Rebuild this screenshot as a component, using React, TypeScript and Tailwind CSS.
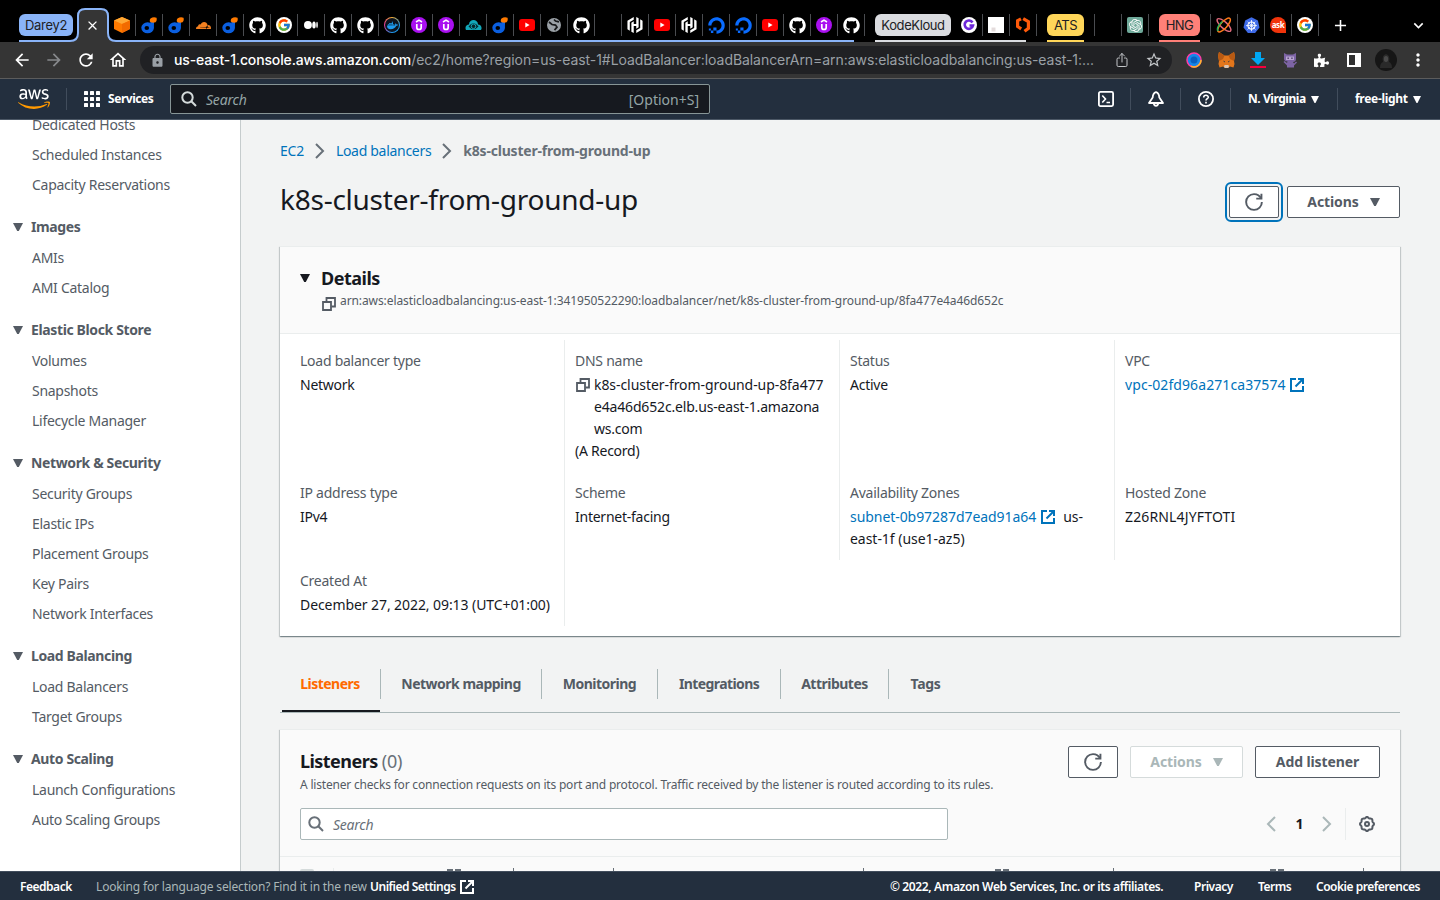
import React from "react";
import { FaGithub, FaDigitalOcean, FaDocker, FaPuzzlePiece, FaAws } from "react-icons/fa";
import { FcGoogle } from "react-icons/fc";
import { SiHashicorp, SiCloudflare, SiOpenai } from "react-icons/si";
import { IoShareOutline } from "react-icons/io5";
import { MdLock, MdArrowBack, MdArrowForward, MdRefresh, MdStarOutline, MdMoreVert, MdOutlineHome, MdClose, MdAdd, MdExpandMore } from "react-icons/md";

/* ---------- tab favicons ---------- */

const Box = () => (
  <svg width="18" height="18" viewBox="0 0 18 18">
    <path d="M9 1l8 3.6V13L9 17l-8-4V4.6z" fill="#ff7a00" />
    <path d="M9 1l8 3.6L9 8 1 4.6z" fill="#ffa733" />
    <path d="M9 8l8-3.4V13L9 17z" fill="#f26a00" />
  </svg>
);

const Darey = () => (
  <svg width="16" height="17" viewBox="0 0 16 17">
    <path d="M9 4.5L13 5c0 3 0 5.500-1.200 8" fill="#0b5fe0" />
    <ellipse cx="6.600" cy="10.800" rx="6.300" ry="5.500" fill="#0b5fe0" />
    <ellipse cx="5.800" cy="11" rx="2.300" ry="2" fill="#000" />
    <path d="M9.500 1.500Q12.500-.5 15.500.8 16.300 3.500 14.500 5.300 11.500 6.300 9 4.800 8.300 3 9.500 1.500z" fill="#ff7a00" />
  </svg>
);

const Github = () => <FaGithub size={17} color="#fff" />;
const Google = () => (
  <span className="flex size-4 items-center justify-center rounded-full bg-white">
    <FcGoogle size={14} />
  </span>
);
const Cloudflare = () => <SiCloudflare size={15} color="#f38020" />;
const Medium = () => (
  <svg width="14" height="14" viewBox="0 0 16 16" fill="#fff">
    <circle cx="4.500" cy="8" r="4.500" />
    <ellipse cx="11.400" cy="8" rx="2" ry="4" />
    <ellipse cx="14.900" cy="8" rx=".9" ry="3.600" />
  </svg>
);
const Docker = () => (
  <span className="flex size-4 items-center justify-center rounded-full bg-[conic-gradient(#f9b233,#1d9bf0,#1d9bf0,#e5389b,#f9b233)] p-px">
    <span className="flex size-full items-center justify-center rounded-full bg-[#0c1420]">
      <FaDocker size={11} color="#1d9bf0" />
    </span>
  </span>
);
const Udemy = () => (
  <svg width="16" height="16" viewBox="0 0 16 16" fill="none" stroke="#fff">
    <circle cx="8" cy="8" r="8" fill="#a910f0" stroke="none" />
    <path d="M5 5l3-1.900L11 5" strokeWidth="1.500" />
    <path d="M5.800 7v3.400c0 2.700 4.400 2.700 4.400 0V7" strokeWidth="1.700" />
  </svg>
);
const CloudEye = () => (
  <svg width="17" height="12" viewBox="0 0 17 12">
    <path d="M1 11C-.5 8 1.500 5.500 4 5.500 4-.5 13-.5 13 5.500c3 0 4.500 3 3 5.500z" fill="#12a7b8" />
    <path d="M3.500 7.500Q8.500 1 13.500 7.500 8.500 13 3.500 7.500z" fill="#06262b" />
    <circle cx="8.500" cy="7.300" r="2.300" fill="none" stroke="#12a7b8" />
  </svg>
);
const Youtube = () => (
  <svg width="16" height="12" viewBox="0 0 16 12">
    <rect width="16" height="12" rx="3" fill="#f00" />
    <path d="M6.300 3.500v5l4.300-2.500z" fill="#fff" />
  </svg>
);
const Globe = () => (
  <svg width="14" height="14" viewBox="0 0 14 14">
    <circle cx="7" cy="7" r="7" fill="#9aa0a6" />
    <path d="M2 4l3 2.500 3.500.6 1.500 2-2.500 3M7 1.500L8.500 3 12 3.800" fill="none" stroke="#17181a" strokeWidth="1.700" />
  </svg>
);
const Hashi = () => <SiHashicorp size={16} color="#fff" />;
const Ocean = () => <FaDigitalOcean size={17} color="#0a6cff" />;
const PurpleG = () => (
  <svg width="16" height="16" viewBox="0 0 16 16" fill="none">
    <circle cx="8" cy="8" r="8" fill="#fff" />
    <path d="M11.500 5.500A4.200 4.200 0 1 0 12 8.500H8.500" stroke="#6d28d9" strokeWidth="2.600" />
  </svg>
);
const Page = () => (
  <svg width="16" height="16" viewBox="0 0 16 16">
    <path d="M0 0h16v16H0z" fill="#fff" />
    <path d="M3.500 10.500h4v4h-4z" fill="#e4dcdc" />
  </svg>
);
const Brackets = () => (
  <svg width="16" height="16" viewBox="0 0 16 16" fill="none" stroke="#ff5a0a" strokeWidth="3.200">
    <path d="M6 1.800L2.600 3.700v5.800l3.600 2.400" />
    <path d="M8.200 1.600l5.200 3v6.800L9.500 14.200" />
  </svg>
);
const OpenAI = () => (
  <span className="flex size-4 items-center justify-center rounded-[2px] bg-[#6fa99a]">
    <SiOpenai size={13} color="#fff" />
  </span>
);
const Orbit = () => (
  <svg width="16" height="16" viewBox="0 0 16 16" fill="none" strokeWidth="1.500">
    <ellipse cx="8" cy="8" rx="8.800" ry="3.200" transform="rotate(42 8 8)" stroke="#e26a7c" />
    <ellipse cx="8" cy="8" rx="8.800" ry="3.200" transform="rotate(-48 8 8)" stroke="#ff7a1a" />
    <path d="M2 14c-1.500-2.500 1-6.500 4.500-9.500" stroke="#21b35b" />
  </svg>
);
const Kube = () => (
  <svg width="17" height="17" viewBox="0 0 17 17" fill="none">
    <path d="M8.500.3l6.400 3.100 1.600 7-4.400 5.600H4.900L.5 10.400l1.600-7z" fill="#3f6be8" />
    <circle cx="8.500" cy="8.600" r="3.600" stroke="#fff" strokeWidth="1.200" />
    <path d="M8.500 3v11.200M3 8.600h11M4.600 4.700l7.800 7.800M12.400 4.700l-7.800 7.800" stroke="#fff" strokeWidth=".8" />
  </svg>
);
const Ask = () => (
  <span className="flex size-4 items-center justify-center rounded-full rounded-br-none bg-[#f1340b] font-['Noto_Sans',sans-serif] text-[8px] leading-none font-bold tracking-[-0.4px] text-white">
    ask
  </span>
);
const Blank = () => null;

const darey = [Box, Darey, Darey, Cloudflare, Darey, Github, Google, Medium, Github, Github, Docker, Udemy, Udemy, CloudEye, Darey, Youtube, Globe, Github, Blank, Hashi, Youtube, Hashi, Ocean, Ocean, Youtube, Github, Udemy, Github];

const Tabs = ({ items }: { items: React.ComponentType[] }) => (
  <>
    {items.map((Icon, i) => (
      <div key={i} className="flex h-[22px] w-[27px] items-center justify-center border-r border-[#4a4c50]">
        <Icon />
      </div>
    ))}
  </>
);

const TabStrip = () => (
  <div className="relative flex h-[42px] shrink-0 items-center bg-black pt-2 font-[Inter,sans-serif] text-[13px] text-[#202124]">
    <div className="ml-[19px] flex h-[22px] w-[54px] items-center justify-center rounded-[6px] bg-[#8ab4f8] tracking-[-0.3px]">Darey2</div>
    <svg className="absolute top-[7px] left-[19px]" width="836" height="35" viewBox="0 0 836 35" fill="none">
      <path d="M0 34h51q8 0 8-8V9q0-7 7-7h16q7 0 7 7v17q0 8 8 8v1H51z" fill="#353535" />
      <path d="M0 34h51q8 0 8-8V9q0-7 7-7h16q7 0 7 7v17q0 8 8 8h738" stroke="#8ab4f8" strokeWidth="2" />
    </svg>
    <div className="relative flex w-[36px] justify-end pr-[9px]">
      <MdClose size={15} color="#fff" />
    </div>
    <Tabs items={darey} />
    <div className="ml-[10px] flex h-[22px] w-[76px] items-center justify-center rounded-[6px] bg-[#dadce0] tracking-[-0.4px]">KodeKloud</div>
    <div className="flex pl-[5px]">
      <Tabs items={[PurpleG, Page, Brackets]} />
    </div>
    <div className="ml-[10px] flex h-[22px] w-[37px] items-center justify-center rounded-[6px] bg-[#ffd659] tracking-[-0.6px]">ATS</div>
    <div className="ml-[10px] flex border-l border-[#4a4c50]">
      <Tabs items={[Blank, OpenAI]} />
    </div>
    <div className="ml-[10px] flex h-[22px] w-[41px] items-center justify-center rounded-[6px] bg-[#ff8078] tracking-[-0.6px]">HNG</div>
    <div className="ml-[10px] flex border-l border-[#4a4c50]">
      <Tabs items={[Orbit, Kube, Ask, Google]} />
    </div>
    <div className="ml-3 text-white">
      <MdAdd size={19} />
    </div>
    <div className="mr-3 ml-auto text-white">
      <MdExpandMore size={19} />
    </div>
    <i className="absolute bottom-0 left-[875px] h-0.5 w-[151px] bg-[#dadce0]" />
    <i className="absolute bottom-0 left-[1047px] h-0.5 w-[37px] bg-[#ffd659]" />
    <i className="absolute bottom-0 left-[1159px] h-0.5 w-[41px] bg-[#ff8078]" />
  </div>
);

/* ---------- browser toolbar ---------- */

const Fox = () => (
  <svg width="17" height="16" viewBox="0 0 17 16">
    <path d="M1 0l5.500 3.500h4L16 0l1 4-1 5 .5 3-1 3.500-3.500-1-2 1.500H7l-2-1.500-3.500 1-1-3.500L1 9 0 4z" fill="#e2761b" />
    <path d="M1 0l5.500 3.500L5 7 1 9 0 4zM16 0l-5.500 3.500L12 7l4 2 1-5z" fill="#b85a13" />
    <path d="M5 8.500l2 1-.5 1zM12 8.500l-2 1 .5 1z" fill="#233447" />
    <path d="M6.500 13h4l.5 2-1 1H7l-1-1z" fill="#d8c5b5" />
  </svg>
);

const Toolbar = () => (
  <div className="flex h-[37px] shrink-0 items-center border-b border-[#5c5c5c] bg-[#353535] text-white">
    <div className="flex w-[140px] shrink-0 items-center gap-[12px] pl-[12px]">
      <MdArrowBack size={20} />
      <MdArrowForward size={20} color="#87898c" />
      <MdRefresh size={20} />
      <MdOutlineHome size={20} />
    </div>
    <div className="flex h-7 w-[1032px] shrink-0 items-center rounded-full bg-[#202124] pl-[10px] font-[Inter,sans-serif] text-[14px]">
      <MdLock size={15} color="#9aa0a6" />
      <p className="ml-[9px] w-[940px] whitespace-nowrap text-[#9aa0a6]">
        <span className="font-medium tracking-[-0.14px] text-white">us-east-1.console.aws.amazon.com</span>
        <span className="tracking-[-0.06px]">/ec2/home?region=us-east-1#LoadBalancer:loadBalancerArn=arn:aws:elasticloadbalancing:us-east-1:...</span>
      </p>
      <IoShareOutline size={16} color="#c4c7ca" />
      <MdStarOutline className="ml-[15px]" size={18} color="#c4c7ca" />
    </div>
    <div className="flex w-[268px] items-center pl-[14px]">
      <svg width="16" height="16" viewBox="0 0 16 16">
        <circle cx="8" cy="8" r="7" fill="#1687e8" stroke="#ff3ea5" strokeWidth="1.500" />
        <path d="M15 8A7 7 0 0 1 5 14.300" fill="none" stroke="#ffb52e" strokeWidth="1.500" />
        <circle cx="8" cy="8" r="3.500" fill="#0a5fc0" />
      </svg>
      <div className="ml-4"><Fox /></div>
      <svg className="ml-[15px]" width="16" height="16" viewBox="0 0 16 16">
        <path d="M5 0h6v6h4l-7 7-7-7h4z" fill="#00a8f4" />
        <path d="M0 14h16v2H0z" fill="#f5003d" />
      </svg>
      <svg className="ml-4" width="16" height="16" viewBox="0 0 16 16">
        <path d="M2 1l3 1.500h6L14 1v6q0 2.500-3 3l1 1.500 2-2 1 1-3 3v2H5v-2L1.500 10l1-1 2.500 2 .5-1.500Q2 9 2 7z" fill="#7d64a5" />
        <path d="M4 4.500h8V8H4z" fill="#b9a6d3" />
        <path d="M5.500 5.500h1.300v1.500H5.500zM9.300 5.500h1.300v1.500H9.300z" fill="#4b3b66" />
      </svg>
      <FaPuzzlePiece className="ml-4" size={15} />
      <svg className="ml-[18px]" width="14" height="14" viewBox="0 0 14 14">
        <path d="M0 0h14v14H0z" fill="#fff" />
        <path d="M2 2h6v10H2z" fill="#303030" />
      </svg>
      <svg className="ml-[14px]" width="22" height="22" viewBox="0 0 22 22">
        <circle cx="11" cy="11" r="11" fill="#161616" />
        <path d="M5 19q0-5 3-6-1.500-7 3-8 4.500 1 3 8 3 1 3 6z" fill="#2a2a2a" />
        <ellipse cx="11" cy="10" rx="2.200" ry="3" fill="#4a4a4a" />
      </svg>
      <MdMoreVert className="ml-[11px]" size={20} />
    </div>
  </div>
);

/* ---------- console icons ---------- */

const Caret = ({ className = "" }: { className?: string }) => (
  <svg className={className} width="10" height="8" viewBox="0 0 10 8" fill="currentColor">
    <path d="M0 0h10L5.800 8H4.200z" />
  </svg>
);
const SmallCaret = () => (
  <svg className="shrink-0" width="8" height="7" viewBox="0 0 8 7" fill="currentColor">
    <path d="M0 0h8L4.500 7h-1z" />
  </svg>
);
const Refresh = () => (
  <svg width="18" height="18" viewBox="0 0 16 16" fill="none" stroke="currentColor" strokeWidth="1.700">
    <path d="M10 5h4.600V.6" />
    <path d="M15 8a6.957 6.957 0 0 1-7 7 6.957 6.957 0 0 1-7-7 6.957 6.957 0 0 1 7-7 6.870 6.870 0 0 1 6.300 4" />
  </svg>
);
const Magnifier = ({ className = "" }: { className?: string }) => (
  <svg className={className} width="16" height="16" viewBox="0 0 16 16" fill="none" stroke="currentColor" strokeWidth="2">
    <circle cx="6.500" cy="6.500" r="5.200" />
    <path d="M10.300 10.300L15 15" />
  </svg>
);
const External = ({ className = "" }: { className?: string }) => (
  <svg className={className} width="16" height="16" viewBox="0 0 16 16" fill="none" stroke="currentColor" strokeWidth="2">
    <path d="M9 2h5v5M14 2L6.500 9.500" />
    <path d="M14 9v5H2V2h5" />
  </svg>
);
const Copy = ({ className = "" }: { className?: string }) => (
  <svg className={className} width="16" height="16" viewBox="0 0 16 16" fill="none" stroke="currentColor" strokeWidth="1.800">
    <path d="M2 6h8v8H2z" />
    <path d="M5.500 5.500V2H14v8.500h-3.500" />
  </svg>
);
const Angle = ({ className = "" }: { className?: string }) => (
  <svg className={className} width="10" height="16" viewBox="0 0 10 16" fill="none" stroke="currentColor" strokeWidth="2">
    <path d="M1 1l7 7-7 7" />
  </svg>
);
const Gear = () => {
  const points = Array.from({ length: 96 }, (_, i) => {
    const a = (i / 96) * Math.PI * 2;
    const r = 6.5 + 0.5 * Math.cos(a * 8);
    return `${(8 + r * Math.cos(a)).toFixed(2)},${(8 + r * Math.sin(a)).toFixed(2)}`;
  }).join(" ");
  return (
    <svg width="16" height="16" viewBox="0 0 16 16" fill="none" stroke="currentColor" strokeWidth="2">
      <polygon points={points} />
      <circle cx="8" cy="8" r="2" />
    </svg>
  );
};

/* ---------- console navigation ---------- */

const Divider = () => <i className="h-[22px] w-px shrink-0 bg-[#414d5c]" />;

const Nav = () => (
  <div className="flex h-[41px] shrink-0 items-center border-b border-[#4c5866] bg-[#232f3e] text-[12px] font-bold tracking-[-0.45px] text-white">
    <svg className="absolute" width="0" height="0">
      <defs>
        <linearGradient id="aws" gradientUnits="userSpaceOnUse" x1="0" y1="0" x2="0" y2="512">
          <stop offset=".58" stopColor="#fff" />
          <stop offset=".58" stopColor="#ff9900" />
        </linearGradient>
      </defs>
    </svg>
    <FaAws className="ml-[18px] h-5 w-8 shrink-0" viewBox="0 62 640 388" preserveAspectRatio="none" fill="url(#aws)" />
    <div className="w-4" />
    <Divider />
    <svg className="ml-[17px] shrink-0" width="16" height="16" viewBox="0 0 16 16" fill="#fff">
      {[0, 6, 12].map((y) => [0, 6, 12].map((x) => <rect key={`${x}-${y}`} x={x} y={y} width="4" height="4" rx=".6" />))}
    </svg>
    <span className="ml-2 w-[62px]">Services</span>
    <div className="flex h-[30px] w-[540px] shrink-0 items-center rounded-[2px] border border-[#879596] bg-[#16191f] px-[10px] text-[14px] font-normal tracking-[-0.2px] text-[#95a5a6]">
      <Magnifier className="text-[#d5dbdb]" />
      <span className="ml-[9px] pt-0.5 italic">Search</span>
      <span className="ml-auto pt-0.5 tracking-[0px]">[Option+S]</span>
    </div>
    <div className="ml-auto flex items-center">
      <svg className="mr-4" width="16" height="16" viewBox="0 0 16 16" fill="none" stroke="#fff" strokeWidth="1.800">
        <rect x=".9" y=".9" width="14.200" height="14.200" rx="1.500" />
        <path d="M4.300 4.500L7.500 8l-3.200 3.500M8.500 11.500H12" strokeWidth="1.600" />
      </svg>
      <Divider />
      <svg className="mr-4 ml-[17px]" width="16" height="16" viewBox="0 0 16 16" fill="none" stroke="#fff" strokeWidth="1.800" strokeLinejoin="round">
        <path d="M8 1.200C5.500 2 4.800 4 4.700 6.500L1 12h14l-3.700-5.500C11.200 4 10.500 2 8 1.200z" />
        <path d="M5.800 12.500c.2 3 4.200 3 4.400 0" />
      </svg>
      <Divider />
      <svg className="mr-4 ml-[17px]" width="16" height="16" viewBox="0 0 16 16" fill="none" stroke="#fff" strokeWidth="1.800">
        <circle cx="8" cy="8" r="7.100" />
        <path d="M5.700 6.500c0-3 4.600-2.800 4.600-.3C10.300 7.700 8 7.800 8 9.600M8 10.800v1.700" strokeWidth="1.600" />
      </svg>
      <Divider />
      <div className="flex w-[106px] items-center gap-[6px] pl-[17px]">
        <span className="w-[57px] whitespace-nowrap">N. Virginia</span>
        <SmallCaret />
      </div>
      <Divider />
      <div className="flex w-[102px] items-center gap-[6px] pl-[17px]">
        <span className="w-[52px] tracking-[-0.3px] whitespace-nowrap">free-light</span>
        <SmallCaret />
      </div>
    </div>
  </div>
);

const groups: [string, string[]][] = [
  ["", ["Dedicated Hosts", "Scheduled Instances", "Capacity Reservations"]],
  ["Images", ["AMIs", "AMI Catalog"]],
  ["Elastic Block Store", ["Volumes", "Snapshots", "Lifecycle Manager"]],
  ["Network & Security", ["Security Groups", "Elastic IPs", "Placement Groups", "Key Pairs", "Network Interfaces"]],
  ["Load Balancing", ["Load Balancers", "Target Groups"]],
  ["Auto Scaling", ["Launch Configurations", "Auto Scaling Groups"]],
];

const Sidebar = () => (
  <nav className="w-[241px] shrink-0 overflow-hidden border-r border-[#c6cccd] bg-white tracking-[-0.28px] text-[#545b64]">
    <div className="-mt-[10px]">
      {groups.map(([title, items]) => (
        <section key={title}>
          {title && (
            <h3 className="mt-4 mb-[5px] flex h-[22px] items-center gap-2 pl-[13px] font-bold tracking-[-0.37px]">
              <Caret />
              {title}
            </h3>
          )}
          {items.map((item) => (
            <a key={item} className="flex h-[30px] items-center pl-8">{item}</a>
          ))}
        </section>
      ))}
    </div>
  </nav>
);

/* ---------- page content ---------- */

const Button = ({ className, children }: { className: string; children: React.ReactNode }) => (
  <button className={`flex h-8 items-center justify-center rounded-[2px] border bg-white font-bold tracking-[-0.1px] ${className}`}>{children}</button>
);

const card = "border-t border-[#eaeded] shadow-[0_1px_1px_0_rgba(0,28,36,.3),1px_1px_1px_0_rgba(0,28,36,.15),-1px_1px_1px_0_rgba(0,28,36,.15)]";

const Field = ({ label, line, children }: { label: string; line?: boolean; children: React.ReactNode }) => (
  <div className={`py-[10px] pl-[10px] ${line ? "border-r border-[#eaeded]" : ""}`}>
    <div className="text-[#545b64]">{label}</div>
    <div className="mt-0.5 text-[#16191f]">{children}</div>
  </div>
);

const Details = () => (
  <section className={`mt-[26px] h-[390px] bg-white ${card}`}>
    <header className="h-[87px] border-b border-[#eaeded] bg-[#fafafa] pt-[20px] pl-5">
      <h2 className="flex h-[22px] items-center gap-[11px] text-[18px] font-bold tracking-[-0.5px] text-[#16191f]">
        <Caret />
        Details
      </h2>
      <div className="flex pt-1 pl-[21px] text-[12px] leading-4 tracking-[-0.09px] whitespace-nowrap text-[#545b64]">
        <Copy className="mt-[3px] mr-[3px]" />
        arn:aws:elasticloadbalancing:us-east-1:341950522290:loadbalancer/net/k8s-cluster-from-ground-up/8fa477e4a46d652c
      </div>
    </header>
    <div className="mt-[6px] ml-[10px] grid w-[1100px] grid-cols-4">
      <Field label="Load balancer type" line>Network</Field>
      <Field label="DNS name" line>
        <div className="flex">
          <Copy className="mt-[3px] mr-[3px] shrink-0 text-[#545b64]" />
          <span>
            <span className="tracking-[-0.06px]">k8s-cluster-from-ground-up-8fa477</span>
            <br />
            <span className="tracking-[-0.17px]">e4a46d652c.elb.us-east-1.amazona</span>
            <br />
            ws.com
          </span>
        </div>
        (A Record)
      </Field>
      <Field label="Status" line>Active</Field>
      <Field label="VPC">
        <span className="flex items-center gap-[3px] tracking-[0.08px] text-[#0073bb]">
          vpc-02fd96a271ca37574 <External />
        </span>
      </Field>
      <Field label="IP address type" line>IPv4</Field>
      <Field label="Scheme" line>Internet-facing</Field>
      <Field label="Availability Zones" line>
        <span className="flex items-center tracking-[-0.06px] text-[#0073bb]">
          subnet-0b97287d7ead91a64 <External className="mr-[7px] ml-1" /> <span className="text-[#16191f]">us-</span>
        </span>
        <span className="tracking-[-0.03px]">east-1f (use1-az5)</span>
      </Field>
      <Field label="Hosted Zone">
        <span className="tracking-[0.15px]">Z26RNL4JYFTOTI</span>
      </Field>
      <Field label="Created At" line>
        <span className="tracking-[-0.08px]">December 27, 2022, 09:13 (UTC+01:00)</span>
      </Field>
    </div>
  </section>
);

const DetailTabs = () => (
  <div className="mt-[25px] flex h-[52px] items-start border-b border-[#aab7b8] pt-[8px] font-bold tracking-[-0.5px] text-[#545b64]">
    <div className="flex h-[43px] w-[101px] flex-col">
      <div className="flex h-[30px] items-center justify-center border-r border-[#aab7b8] text-[#ff6a00]">Listeners</div>
      <i className="mt-auto ml-[2px] h-0.5 w-[98px] bg-[#16191f]" />
    </div>
    <div className="flex h-[30px] w-[161px] items-center justify-center border-r border-[#aab7b8]">Network mapping</div>
    <div className="flex h-[30px] w-[116px] items-center justify-center border-r border-[#aab7b8]">Monitoring</div>
    <div className="flex h-[30px] w-[123px] items-center justify-center border-r border-[#aab7b8] tracking-[-0.6px]">Integrations</div>
    <div className="flex h-[30px] w-[108px] items-center justify-center border-r border-[#aab7b8]">Attributes</div>
    <div className="flex h-[30px] w-[73px] items-center justify-center tracking-[-0.3px]">Tags</div>
  </div>
);

const columns: [string, string, boolean][] = [
  ["w-[180px]", "pr-[52px]", true],
  ["w-[100px]", "", false],
  ["w-[250px]", "", false],
  ["w-[250px]", "pr-[104px]", true],
  ["w-[250px]", "pr-[79px]", true],
];

const Listeners = () => (
  <section className={`mt-4 h-[180px] shrink-0 bg-[#fafafa] ${card}`}>
    <div className="flex h-[78px] pt-4 pr-5 pl-5">
      <div>
        <h2 className="mt-1 h-[22px] text-[18px] leading-[22px] font-bold tracking-[-0.55px] text-[#16191f]">
          Listeners <span className="font-normal tracking-[-0.2px] text-[#687078]">(0)</span>
        </h2>
        <p className="mt-[5px] text-[12px] leading-4 tracking-[-0.19px] whitespace-nowrap text-[#545b64]">
          A listener checks for connection requests on its port and protocol. Traffic received by the listener is routed according to its rules.
        </p>
      </div>
      <div className="ml-auto flex gap-3">
        <Button className="w-[50px] border-[#545b64] text-[#545b64]"><Refresh /></Button>
        <Button className="w-[113px] gap-[11px] border-[#d5dbdb] text-[#aab7b8]">Actions <Caret /></Button>
        <Button className="w-[125px] border-[#545b64] text-[#545b64]">Add listener</Button>
      </div>
    </div>
    <div className="flex h-[49px] items-start border-b border-[#eaeded] px-5">
      <div className="flex h-8 w-[648px] items-center rounded-[2px] border border-[#aab7b8] bg-white pl-[7px] text-[#687078] italic">
        <Magnifier className="mr-[9px]" />
        <span className="pt-0.5">Search</span>
      </div>
      <div className="ml-auto flex h-8 items-center text-[#aab7b8]">
        <Angle className="rotate-180" />
        <span className="mr-[18px] ml-[19px] w-[9px] text-center font-bold text-[#16191f]">1</span>
        <Angle />
        <i className="mr-[13px] ml-[13px] h-8 w-px bg-[#eaeded]" />
        <span className="mr-[5px] text-[#545b64]"><Gear /></span>
      </div>
    </div>
    <div className="flex items-start pt-[11px] pl-5">
      <i className="mt-px h-4 w-[14px] rounded-[2px] bg-[#d5dbdb]" />
      <i className="ml-[19px] h-6 w-px bg-[#eaeded]" />
      {columns.map(([width, pad, sortable], i) => (
        <div key={i} className={`flex h-6 justify-end gap-[2px] border-r border-[#687078] pt-px ${width} ${pad}`}>
          {sortable && (
            <>
              <i className="h-3 w-1.5 bg-[#687078]" />
              <i className="h-3 w-1.5 bg-[#687078]" />
            </>
          )}
        </div>
      ))}
    </div>
  </section>
);

const Footer = () => (
  <footer className="flex h-[29px] shrink-0 items-center border-t border-[#414d5c] bg-[#232f3e] pt-px pr-5 pl-5 text-[12px] font-semibold tracking-[-0.48px] whitespace-nowrap text-white">
    <span className="w-[76px]">Feedback</span>
    <span className="w-[274px] font-normal tracking-[-0.16px] text-[#aab7b8]">Looking for language selection? Find it in the new</span>
    <span className="w-[89px]">Unified Settings</span>
    <External />
    <span className="ml-auto w-[304px] tracking-[-0.37px]">© 2022, Amazon Web Services, Inc. or its affiliates.</span>
    <span className="w-[64px]">Privacy</span>
    <span className="w-[58px]">Terms</span>
    <span className="w-[104px]">Cookie preferences</span>
  </footer>
);

export default function App() {
  return (
    <div className="flex h-[900px] w-[1440px] flex-col overflow-hidden bg-[#f2f3f3] font-['Noto_Sans',sans-serif] text-[14px] leading-[22px] tracking-[-0.25px]">
      <TabStrip />
      <Toolbar />
      <Nav />
      <div className="flex min-h-0 flex-1">
        <Sidebar />
        <main className="min-w-0 flex-1 overflow-hidden pt-5 pr-10 pl-[39px]">
          <div className="flex h-[22px] items-center text-[#0073bb]">
            EC2
            <Angle className="mx-[11px] text-[#687078]" />
            <span className="tracking-[-0.3px]">Load balancers</span>
            <Angle className="mx-[11px] text-[#687078]" />
            <span className="font-bold tracking-[-0.2px] text-[#687078]">k8s-cluster-from-ground-up</span>
          </div>
          <div className="mt-[22px] flex h-9 items-center">
            <h1 className="pb-[6px] text-[28px] leading-9 tracking-[-0.25px] text-[#16191f]">k8s-cluster-from-ground-up</h1>
            <Button className="mr-2 ml-auto w-[50px] border-[#545b64] text-[#545b64] outline-2 outline-offset-2 outline-[#0073bb]"><Refresh /></Button>
            <Button className="w-[113px] gap-[11px] border-[#545b64] text-[#545b64]">Actions <Caret /></Button>
          </div>
          <Details />
          <DetailTabs />
          <Listeners />
        </main>
      </div>
      <Footer />
    </div>
  );
}
